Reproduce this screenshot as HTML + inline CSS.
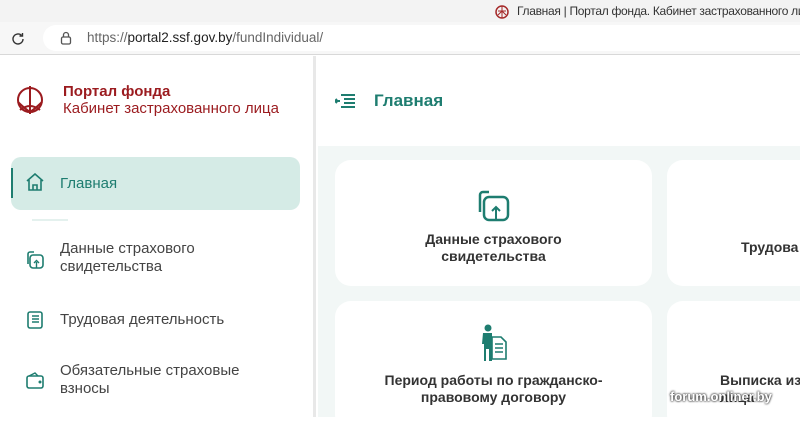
<!DOCTYPE html>
<html><head><meta charset="utf-8"><style>
*{margin:0;padding:0;box-sizing:border-box}
body{width:800px;height:417px;overflow:hidden;font-family:"Liberation Sans",sans-serif;background:#fff;position:relative}
.abs{position:absolute;white-space:nowrap}
.tab{left:0;top:0;width:800px;height:22px;background:#f3f3f3}
.addr{left:0;top:22px;width:800px;height:33px;background:#f7f7f7;border-bottom:1px solid #d8d8d8}
.pill{left:43px;top:25px;width:770px;height:26px;background:#fff;border-radius:13px}
.main{left:318px;top:56px;width:482px;height:361px;background:#f2f7f6}
.card{background:#fff;border-radius:16px;text-align:center;color:#333;font-weight:bold;font-size:14px;line-height:17px}
.side{left:0;top:56px;width:316px;height:361px;background:#fff;border-right:3px solid #e8e8e8}
.item{left:60px;color:#444;font-size:15px;line-height:18px}
</style></head><body>
<div class="abs tab"></div>
<svg class="abs" style="left:495px;top:5px" width="14" height="14" viewBox="0 0 14 14"><circle cx="7" cy="7" r="6" fill="none" stroke="#a52a2a" stroke-width="1.5"/><path d="M7 1v12M3 6h8M3 10l4-4 4 4" stroke="#a52a2a" fill="none"/></svg>
<div class="abs" style="left:517px;top:4px;font-size:12px;color:#333;letter-spacing:-0.3px">Главная | Портал фонда. Кабинет застрахованного лица</div>
<div class="abs addr"></div>
<div class="abs pill"></div>
<svg class="abs" style="left:10px;top:31px" width="16" height="16" viewBox="0 0 16 16"><path d="M13 8a5 5 0 1 1-1.5-3.6" stroke="#333" stroke-width="1.4" fill="none"/><path d="M12.5 2v3h-3" stroke="#333" stroke-width="1.4" fill="none"/></svg>
<svg class="abs" style="left:60px;top:31px" width="12" height="14" viewBox="0 0 12 14"><rect x="1.5" y="6" width="9" height="7" rx="1.5" stroke="#555" fill="none" stroke-width="1.3"/><path d="M3.5 6V4a2.5 2.5 0 0 1 5 0v2" stroke="#555" fill="none" stroke-width="1.3"/></svg>
<div class="abs" style="left:87px;top:30px;font-size:13.5px;color:#666">https://<span style="color:#222">portal2.ssf.gov.by</span>/fundIndividual/</div>
<div class="abs main"></div>
<div class="abs" style="left:318px;top:56px;width:482px;height:90px;background:#fff"></div>
<div class="abs side"></div>
<svg class="abs" style="left:12px;top:84px" width="36" height="34" viewBox="0 0 36 34"><circle cx="18" cy="16" r="12" fill="none" stroke="#9b1b1f" stroke-width="2"/><path d="M18 2v28M8 26q10-8 20 0M6 18q6 6 12 10q6-4 12-10" stroke="#9b1b1f" stroke-width="2" fill="none"/></svg>
<div class="abs" style="left:63px;top:83px;font-size:15px;font-weight:bold;color:#9b1b1f">Портал фонда</div>
<div class="abs" style="left:63px;top:100px;font-size:15px;color:#9b1b1f">Кабинет застрахованного лица</div>
<svg class="abs" style="left:335px;top:93px" width="20" height="16" viewBox="0 0 20 16"><path d="M6 2h14M9 6h11M9 10h11M6 14h14M5 8H0M2 6l-2 2 2 2" stroke="#1e7d70" stroke-width="2" fill="none"/></svg>
<div class="abs" style="left:374px;top:91px;font-size:17px;font-weight:bold;color:#1e7d70">Главная</div>
<div class="abs" style="left:11px;top:157px;width:289px;height:53px;background:#d5ebe6;border-radius:10px"></div>
<div class="abs" style="left:11px;top:168px;width:2px;height:30px;background:#1e7d70"></div>
<div class="abs" style="left:32px;top:219px;width:36px;height:2px;background:#e4f1ee"></div>
<svg class="abs" style="left:25px;top:173px" width="20" height="18" viewBox="0 0 20 18"><path d="M2 8L10 1l8 7M4 7v10h12V7M8 17v-5h4v5" stroke="#1e7d70" stroke-width="1.6" fill="none"/></svg>
<div class="abs item" style="top:175px;color:#1e7d70">Главная</div>
<svg class="abs" style="left:25px;top:250px" width="20" height="20" viewBox="0 0 20 20"><path d="M3 14V4a2 2 0 0 1 2-2h4" stroke="#1e7d70" stroke-width="1.6" fill="none"/><rect x="5" y="5" width="13" height="13" rx="3" stroke="#1e7d70" stroke-width="1.6" fill="none"/><path d="M11.5 18v-6M9 13l2.5-2.5L14 13" stroke="#1e7d70" stroke-width="1.4" fill="none"/></svg>
<div class="abs item" style="top:240px">Данные страхового<br>свидетельства</div>
<svg class="abs" style="left:25px;top:311px" width="20" height="18" viewBox="0 0 20 18"><rect x="3" y="1" width="14" height="16" rx="2" stroke="#1e7d70" stroke-width="1.6" fill="none"/><path d="M7 5h7M7 8h7M7 11h7" stroke="#1e7d70" stroke-width="1.4"/></svg>
<div class="abs item" style="top:311px">Трудовая деятельность</div>
<svg class="abs" style="left:25px;top:372px" width="20" height="18" viewBox="0 0 20 18"><rect x="2" y="4" width="16" height="12" rx="2" stroke="#1e7d70" stroke-width="1.6" fill="none"/><path d="M4 4l6-3 3 3" stroke="#1e7d70" stroke-width="1.4" fill="none"/><circle cx="15" cy="10" r="1.5" fill="#1e7d70"/></svg>
<div class="abs item" style="top:362px">Обязательные страховые<br>взносы</div>
<div class="abs card" style="left:335px;top:160px;width:317px;height:126px"></div>
<svg class="abs" style="left:478px;top:190px" width="32" height="32" viewBox="0 0 32 32"><path d="M2 22V5a3 3 0 0 1 3-3h6" stroke="#1e7d70" stroke-width="2.5" fill="none"/><rect x="6" y="7" width="24" height="23" rx="5" stroke="#1e7d70" stroke-width="2.5" fill="none"/><path d="M18 30V18M14 21l4-4 4 4" stroke="#1e7d70" stroke-width="2" fill="none"/></svg>
<div class="abs card" style="left:335px;top:231px;width:317px;background:none">Данные страхового<br>свидетельства</div>
<div class="abs card" style="left:667px;top:160px;width:160px;height:126px"></div>
<div class="abs card" style="left:741px;top:239px;width:100px;text-align:left;background:none">Трудова</div>
<div class="abs card" style="left:335px;top:301px;width:317px;height:130px"></div>
<svg class="abs" style="left:480px;top:324px" width="28" height="38" viewBox="0 0 28 38"><circle cx="8" cy="4" r="3.5" fill="#1e7d70"/><path d="M3 9h9v28H9V25H6v12H4V20H2z" fill="#1e7d70"/><path d="M12 13h9l5 5v17H12z" fill="#fff" stroke="#1e7d70" stroke-width="1.6"/><path d="M15 20h8M15 24h8M15 28h8" stroke="#1e7d70" stroke-width="1.4"/></svg>
<div class="abs card" style="left:335px;top:372px;width:317px;background:none">Период работы по гражданско-<br>правовому договору</div>
<div class="abs card" style="left:667px;top:301px;width:160px;height:130px"></div>
<div class="abs card" style="left:720px;top:372px;width:100px;text-align:left;background:none">Выписка из<br>лица</div>
<div class="abs" style="left:670px;top:389px;font-size:13px;font-weight:bold;color:#fff;text-shadow:0 0 2px #333,0 0 2px #333">forum.onliner.by</div>
</body></html>
